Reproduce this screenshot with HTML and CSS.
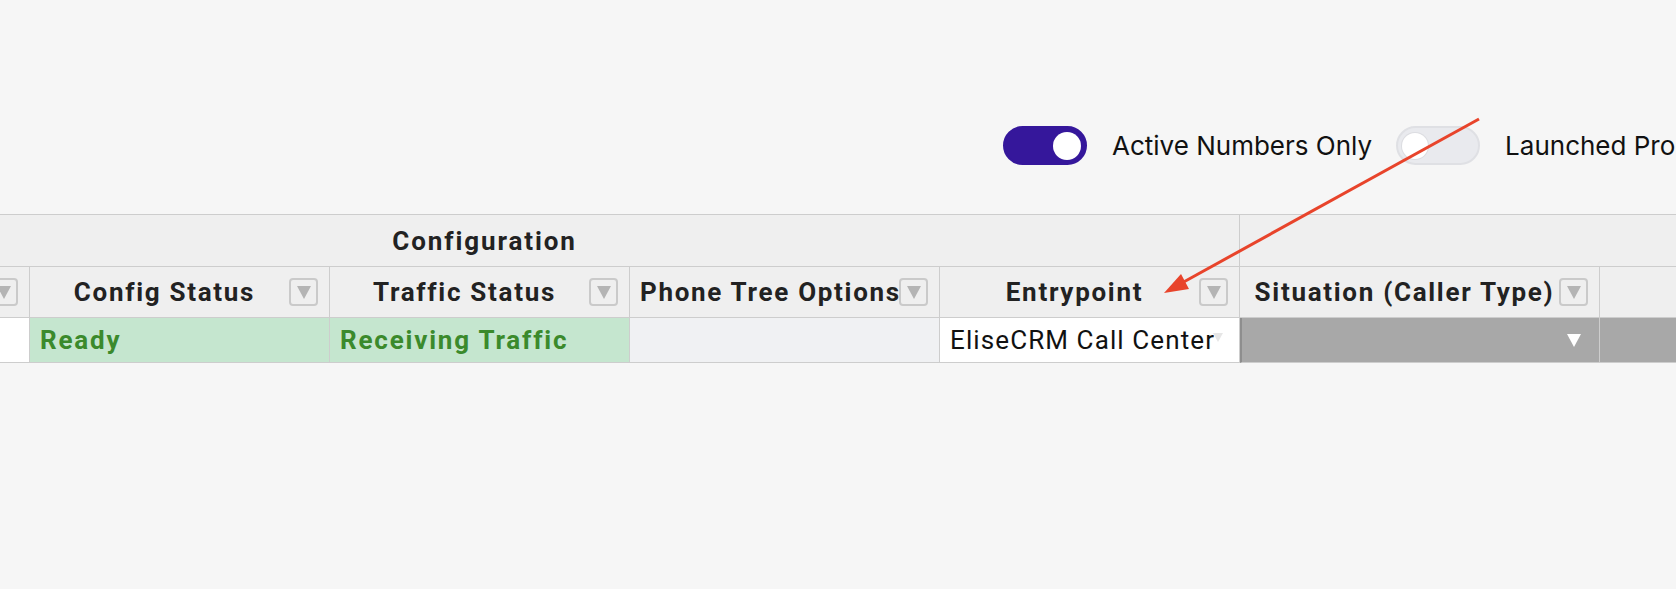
FILE: index.html
```html
<!DOCTYPE html>
<html lang="en">
<head>
    <meta charset="UTF-8">
    <meta name="viewport" content="width=device-width, initial-scale=1.0">
    <title>Numbers</title>
    <link rel="stylesheet" href="styles.css">
</head>
<body>
    <div class="toolbar">
        <label class="switch on"><span class="knob"></span></label>
        <span class="switch-label">Active Numbers Only</span>
        <label class="switch"><span class="knob"></span></label>
        <span class="switch-label">Launched Properties Only</span>
    </div>

    <div class="grid">
        <div class="group span-5">Configuration</div>
        <div class="group span-2"></div>

        <div class="head"><span class="title"></span><span class="filter"></span></div>
        <div class="head"><span class="title">Config Status</span><span class="filter"></span></div>
        <div class="head"><span class="title">Traffic Status</span><span class="filter"></span></div>
        <div class="head"><span class="title">Phone Tree Options</span><span class="filter"></span></div>
        <div class="head"><span class="title">Entrypoint</span><span class="filter"></span></div>
        <div class="head"><span class="title">Situation (Caller Type)</span><span class="filter"></span></div>
        <div class="head"></div>

        <div class="cell"></div>
        <div class="cell ok">Ready</div>
        <div class="cell ok">Receiving Traffic</div>
        <div class="cell muted"></div>
        <div class="cell plain">EliseCRM Call Center<span class="ghost"></span></div>
        <div class="cell select"><span class="caret"></span></div>
        <div class="cell select"></div>
    </div>

    <svg class="annotation" width="1676" height="589" viewBox="0 0 1676 589">
        <line x1="1479" y1="119" x2="1180" y2="284" stroke="#e8442b" stroke-width="3"/>
        <polygon points="1164,293 1181,274 1189,289" fill="#e8442b"/>
    </svg>
</body>
</html>
```

FILE: styles.css
```css
body {
    margin: 0;
    background-color: #f6f6f6;
    width: 1676px;
    height: 589px;
    overflow: hidden;
    position: relative;
    font-family: Roboto, "Liberation Sans", sans-serif;
    color: #222;
}
.toolbar {
    display: flex;
    align-items: center;
    padding: 126px 0 0 1003px;
    height: 39px;
    white-space: nowrap;
}
.switch {
    width: 84px;
    height: 39px;
    border-radius: 20px;
    box-sizing: border-box;
    background-color: #e9eaee;
    border: 2px solid #dfe0e4;
    display: flex;
    align-items: center;
    padding: 0 4px;
    flex-shrink: 0;
}
.switch .knob {
    width: 26px;
    height: 26px;
    border-radius: 50%;
    background-color: white;
    box-shadow: 0 0 0 1px #dcdde1;
}
.switch.on {
    background-color: #35179b;
    border-color: #35179b;
    justify-content: flex-end;
}
.switch.on .knob {
    width: 28px;
    height: 28px;
    box-shadow: none;
}
.switch-label {
    font-family: Inter, "Noto Sans", sans-serif;
    font-size: 26px;
    color: #111;
    margin: 0 24px 0 25px;
}
.grid {
    display: grid;
    grid-template-columns: 300px 300px 300px 310px 300px 360px 400px;
    grid-template-rows: 52px 51px 45px;
    margin: 49px 0 0 -270px;
    border-top: 1px solid #cdcdcd;
    width: max-content;
}
.grid > div {
    box-sizing: border-box;
    border-right: 1px solid #cdcdcd;
    border-bottom: 1px solid #cdcdcd;
    font-size: 26px;
    white-space: nowrap;
}
.group {
    background-color: #efefef;
    font-weight: bold;
    letter-spacing: 1.9px;
    display: flex;
    align-items: center;
    justify-content: center;
}
.span-5 {
    grid-column: span 5;
}
.span-2 {
    grid-column: span 2;
}
.head {
    background-color: #efefef;
    display: flex;
    align-items: center;
    padding: 0 11px 0 10px;
}
.title {
    flex: 1;
    min-width: 0;
    text-align: center;
    font-weight: bold;
    letter-spacing: 1.7px;
}
.filter {
    width: 29px;
    height: 28px;
    box-sizing: border-box;
    border: 2px solid #cacaca;
    border-radius: 4px;
    display: flex;
    align-items: center;
    justify-content: center;
    flex-shrink: 0;
}
.filter::after {
    content: "";
    border-left: 7px solid transparent;
    border-right: 7px solid transparent;
    border-top: 13px solid #b4b4b4;
}
.cell {
    display: flex;
    align-items: center;
    padding-left: 10px;
    background-color: white;
}
.cell.ok {
    background-color: #c5e6cf;
    color: #3b8a2c;
    font-weight: bold;
    letter-spacing: 1.8px;
}
.cell.muted {
    background-color: #f0f1f3;
}
.cell.plain {
    color: #111;
    letter-spacing: 1.1px;
}
.ghost {
    border-left: 5px solid transparent;
    border-right: 5px solid transparent;
    border-top: 9px solid #e6e6e6;
    margin: -6px 0 0 -2px;
}
.cell.select {
    background-color: #a8a8a8;
    justify-content: flex-end;
    padding-right: 18px;
}
.grid > .cell.select:nth-last-child(2) {
    border-left: 2px solid #8e8e8e;
}
.caret {
    border-left: 7px solid transparent;
    border-right: 7px solid transparent;
    border-top: 13px solid white;
}
.annotation {
    position: absolute;
    top: 0;
    left: 0;
    pointer-events: none;
}
```
